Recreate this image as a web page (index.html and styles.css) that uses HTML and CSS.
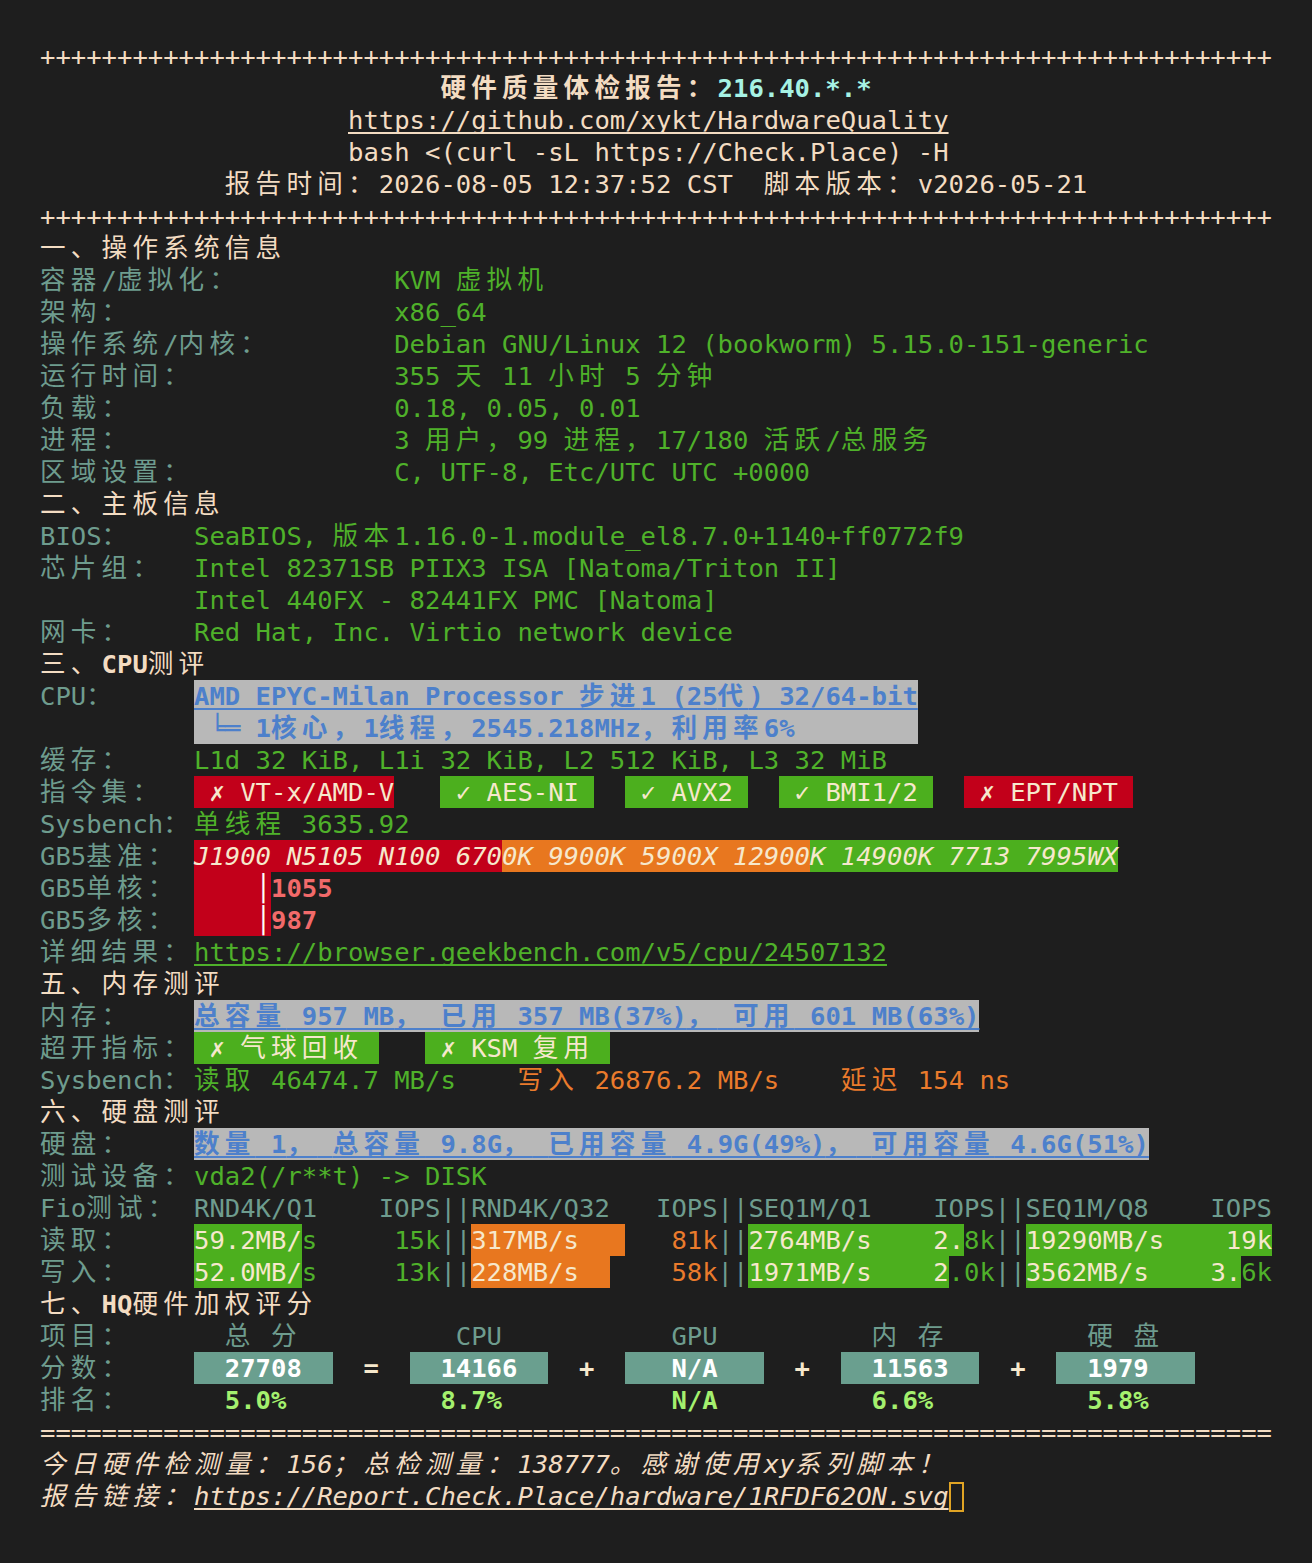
FILE: index.html
```html
<!DOCTYPE html>
<html lang="zh-CN">
<head>
<meta charset="utf-8">
<title>硬件质量体检报告</title>
<link rel="stylesheet" href="styles.css">
</head>
<body>
<main class="term">
<div class="ln">++++++++++++++++++++++++++++++++++++++++++++++++++++++++++++++++++++++++++++++++</div>
<div class="ln in26"><b class="z">硬件质量体检报告：</b><b class="ip">216.40.*.*</b></div>
<div class="ln in20"><span class="u">https://github.com/xykt/HardwareQuality</span></div>
<div class="ln in20">bash &lt;(curl -sL https://Check.Place) -H</div>
<div class="ln in12"><span class="z">报告时间：</span>2026-08-05 12:37:52 CST  <span class="z">脚本版本：</span>v2026-05-21</div>
<div class="ln">++++++++++++++++++++++++++++++++++++++++++++++++++++++++++++++++++++++++++++++++</div>
<div class="ln"><span class="z">一、操作系统信息</span></div>
<div class="ln"><span class="lb w23"><span class="z">容器</span>/<span class="z">虚拟化：</span></span><span class="g">KVM <span class="z">虚拟机</span></span></div>
<div class="ln"><span class="lb w23"><span class="z">架构：</span></span><span class="g">x86_64</span></div>
<div class="ln"><span class="lb w23"><span class="z">操作系统</span>/<span class="z">内核：</span></span><span class="g">Debian GNU/Linux 12 (bookworm) 5.15.0-151-generic</span></div>
<div class="ln"><span class="lb w23"><span class="z">运行时间：</span></span><span class="g">355 <span class="z">天</span> 11 <span class="z">小时</span> 5 <span class="z">分钟</span></span></div>
<div class="ln"><span class="lb w23"><span class="z">负载：</span></span><span class="g">0.18, 0.05, 0.01</span></div>
<div class="ln"><span class="lb w23"><span class="z">进程：</span></span><span class="g">3 <span class="z">用户，</span>99 <span class="z">进程，</span>17/180 <span class="z">活跃</span>/<span class="z">总服务</span></span></div>
<div class="ln"><span class="lb w23"><span class="z">区域设置：</span></span><span class="g">C, UTF-8, Etc/UTC UTC +0000</span></div>
<div class="ln"><span class="z">二、主板信息</span></div>
<div class="ln"><span class="lb w10">BIOS<span class="z">：</span></span><span class="g">SeaBIOS, <span class="z">版本</span>1.16.0-1.module_el8.7.0+1140+ff0772f9</span></div>
<div class="ln"><span class="lb w10"><span class="z">芯片组：</span></span><span class="g">Intel 82371SB PIIX3 ISA [Natoma/Triton II]</span></div>
<div class="ln"><span class="lb w10"></span><span class="g">Intel 440FX - 82441FX PMC [Natoma]</span></div>
<div class="ln"><span class="lb w10"><span class="z">网卡：</span></span><span class="g">Red Hat, Inc. Virtio network device</span></div>
<div class="ln"><span class="z">三、</span><b>CPU</b><span class="z">测评</span></div>
<div class="ln"><span class="lb w10">CPU<span class="z">：</span></span><b class="box w47 hl u">AMD EPYC-Milan Processor <span class="z">步进</span>1 (25<span class="z">代</span>) 32/64-bit</b></div>
<div class="ln"><span class="lb w10"></span><b class="box w47 hl"> ╘═ 1<span class="z">核心，</span>1<span class="z">线程，</span>2545.218MHz<span class="z">，利用率</span>6%</b></div>
<div class="ln"><span class="lb w10"><span class="z">缓存：</span></span><span class="g">L1d 32 KiB, L1i 32 KiB, L2 512 KiB, L3 32 MiB</span></div>
<div class="ln"><span class="lb w10"><span class="z">指令集：</span></span><span class="box w13 bgr"> ✗ VT-x/AMD-V</span>   <span class="box w10 bgg"> ✓ AES-NI</span>  <span class="box w8 bgg"> ✓ AVX2</span>  <span class="box w10 bgg"> ✓ BMI1/2</span>  <span class="box w11 bgr"> ✗ EPT/NPT</span></div>
<div class="ln"><span class="lb w10">Sysbench<span class="z">：</span></span><span class="g"><span class="z">单线程</span> 3635.92</span></div>
<div class="ln"><span class="lb w10">GB5<span class="z">基准：</span></span><i class="box w20 bgr">J1900 N5105 N100 670</i><i class="box w20 bgo">0K 9900K 5900X 12900</i><i class="box w20 bgg">K 14900K 7713 7995WX</i></div>
<div class="ln"><span class="lb w10">GB5<span class="z">单核：</span></span><span class="box w5 bgr">    <b class="bar">│</b></span><b class="rd">1055</b></div>
<div class="ln"><span class="lb w10">GB5<span class="z">多核：</span></span><span class="box w5 bgr">    <b class="bar">│</b></span><b class="rd">987</b></div>
<div class="ln"><span class="lb w10"><span class="z">详细结果：</span></span><span class="g u">https://browser.geekbench.com/v5/cpu/24507132</span></div>
<div class="ln"><span class="z">五、内存测评</span></div>
<div class="ln"><span class="lb w10"><span class="z">内存：</span></span><b class="box w51 hl u"><span class="z">总容量</span> 957 MB<span class="z">，</span> <span class="z">已用</span> 357 MB(37%)<span class="z">，</span> <span class="z">可用</span> 601 MB(63%)</b></div>
<div class="ln"><span class="lb w10"><span class="z">超开指标：</span></span><span class="box w12 bgg"> ✗ <span class="z">气球回收</span></span>   <span class="box w12 bgg"> ✗ KSM <span class="z">复用</span></span></div>
<div class="ln"><span class="lb w10">Sysbench<span class="z">：</span></span><span class="g"><span class="z">读取</span> 46474.7 MB/s</span>    <span class="o"><span class="z">写入</span> 26876.2 MB/s</span>    <span class="o"><span class="z">延迟</span> 154 ns</span></div>
<div class="ln"><span class="z">六、硬盘测评</span></div>
<div class="ln"><span class="lb w10"><span class="z">硬盘：</span></span><b class="box w62 hl u"><span class="z">数量</span> 1<span class="z">，</span> <span class="z">总容量</span> 9.8G<span class="z">，</span> <span class="z">已用容量</span> 4.9G(49%)<span class="z">，</span> <span class="z">可用容量</span> 4.6G(51%)</b></div>
<div class="ln"><span class="lb w10"><span class="z">测试设备：</span></span><span class="g">vda2(/r**t) -&gt; DISK</span></div>
<div class="ln lb"><span class="w10">Fio<span class="z">测试：</span></span>RND4K/Q1    IOPS||RND4K/Q32   IOPS||SEQ1M/Q1    IOPS||SEQ1M/Q8    IOPS</div>
<div class="ln"><span class="lb w10"><span class="z">读取：</span></span><span class="box w7 bgg">59.2MB/</span><span class="g">s     15k</span><span class="lb">||</span><span class="box w10 bgo">317MB/s</span><span class="o">   81k</span><span class="lb">||</span><span class="box w14 bgg">2764MB/s    2.</span><span class="g">8k</span><span class="lb">||</span><span class="box w16 bgg">19290MB/s    19k</span></div>
<div class="ln"><span class="lb w10"><span class="z">写入：</span></span><span class="box w7 bgg">52.0MB/</span><span class="g">s     13k</span><span class="lb">||</span><span class="box w9 bgo">228MB/s</span><span class="o">    58k</span><span class="lb">||</span><span class="box w13 bgg">1971MB/s    2</span><span class="g">.0k</span><span class="lb">||</span><span class="box w14 bgg">3562MB/s    3.</span><span class="g">6k</span></div>
<div class="ln"><span class="z">七、</span><b>HQ</b><span class="z">硬件加权评分</span></div>
<div class="ln lb"><span class="w10"><span class="z">项目：</span></span><span class="w14">  <span class="z">总</span> <span class="z">分</span></span><span class="w14">   CPU</span><span class="w14">   GPU</span><span class="w14">  <span class="z">内</span> <span class="z">存</span></span><span class="w14">  <span class="z">硬</span> <span class="z">盘</span></span></div>
<div class="ln"><span class="lb w10"><span class="z">分数：</span></span><b class="box w9 sc">  27708</b><b class="op">  =  </b><b class="box w9 sc">  14166</b><b class="op">  +  </b><b class="box w9 sc">   N/A</b><b class="op">  +  </b><b class="box w9 sc">  11563</b><b class="op">  +  </b><b class="box w9 sc">  1979</b></div>
<div class="ln"><span class="lb w10"><span class="z">排名：</span></span><b class="pc w14">  5.0%</b><b class="pc w14">  8.7%</b><b class="pc w14">   N/A</b><b class="pc w14">  6.6%</b><b class="pc w14">  5.8%</b></div>
<div class="ln">================================================================================</div>
<div class="ln"><i><span class="z">今日硬件检测量：</span>156<span class="z">；总检测量：</span>138777<span class="z">。感谢使用</span>xy<span class="z">系列脚本！</span></i></div>
<div class="ln"><i><span class="z">报告链接：</span><span class="u">https://Report.Check.Place/hardware/1RFDF62ON.svg</span></i><span class="cur"></span></div>
</main>
</body>
</html>
```

FILE: styles.css
```css
:root {
  --c: 15.4px;
  --fg: #f3dcc2;
  --lb: #6e9c8e;
  --g: #4fb12a;
  --gbg: #4caf1e;
  --rbg: #c2001a;
  --obg: #e8771f;
  --o: #ea7b2c;
  --grey: #b8b8b8;
  --blue: #4d80cb;
  --score: #6a9f8f;
  --pct: #a4f06e;
  --ip: #a6f2e4;
  --red: #f26a6a;
  --bfg: #f6e8cc;
}

html, body {
  margin: 0;
  background: #1e1e1e;
}

body {
  min-height: 1563px;
}

.term {
  display: block;
  padding: 40px 0 0 40px;
  font-family: "DejaVu Sans Mono", "Noto Sans CJK SC", monospace;
  font-size: 25.58px;
  color: var(--fg);
}

.ln {
  height: 32px;
  line-height: 32px;
  white-space: pre;
}

b { font-weight: bold; }
i { font-style: italic; }

.z {
  font-family: "Noto Sans CJK SC", "DejaVu Sans Mono", sans-serif;
  letter-spacing: calc(2 * var(--c) - 1em);
  line-height: 20px;
}

.in26 { padding-left: calc(26 * var(--c)); }
.in20 { padding-left: calc(20 * var(--c)); }
.in12 { padding-left: calc(12 * var(--c)); }

.w5, .w7, .w8, .w9, .w10, .w11, .w12, .w13, .w14, .w16, .w20, .w23, .w47, .w51, .w62 {
  display: inline-block;
  vertical-align: top;
  height: 32px;
  overflow: visible;
}
.w5 { width: calc(5 * var(--c)); }
.w7 { width: calc(7 * var(--c)); }
.w8 { width: calc(8 * var(--c)); }
.w9 { width: calc(9 * var(--c)); }
.w10 { width: calc(10 * var(--c)); }
.w11 { width: calc(11 * var(--c)); }
.w12 { width: calc(12 * var(--c)); }
.w13 { width: calc(13 * var(--c)); }
.w14 { width: calc(14 * var(--c)); }
.w16 { width: calc(16 * var(--c)); }
.w20 { width: calc(20 * var(--c)); }
.w23 { width: calc(23 * var(--c)); }
.w47 { width: calc(47 * var(--c)); }
.w51 { width: calc(51 * var(--c)); }
.w62 { width: calc(62 * var(--c)); }

.lb { color: var(--lb); }
.g { color: var(--g); }
.o { color: var(--o); }
.ip { color: var(--ip); }
.rd { color: var(--red); }
.pc { color: var(--pct); }

.u {
  text-decoration: underline;
  text-decoration-skip-ink: none;
  text-underline-offset: 3px;
  text-decoration-thickness: 2px;
}

.box { color: var(--bfg); }
.hl { background: var(--grey); color: var(--blue); }
.bgr { background: var(--rbg); }
.bgo { background: var(--obg); }
.bgg { background: var(--gbg); }
.bar { color: #ffffff; }

.sc {
  background: var(--score);
  color: #ffffff;
}
.op { color: var(--bfg); }

.cur {
  display: inline-block;
  vertical-align: top;
  box-sizing: border-box;
  width: var(--c);
  height: 30px;
  margin-top: 2px;
  border: 2px solid #e0a424;
}
```
